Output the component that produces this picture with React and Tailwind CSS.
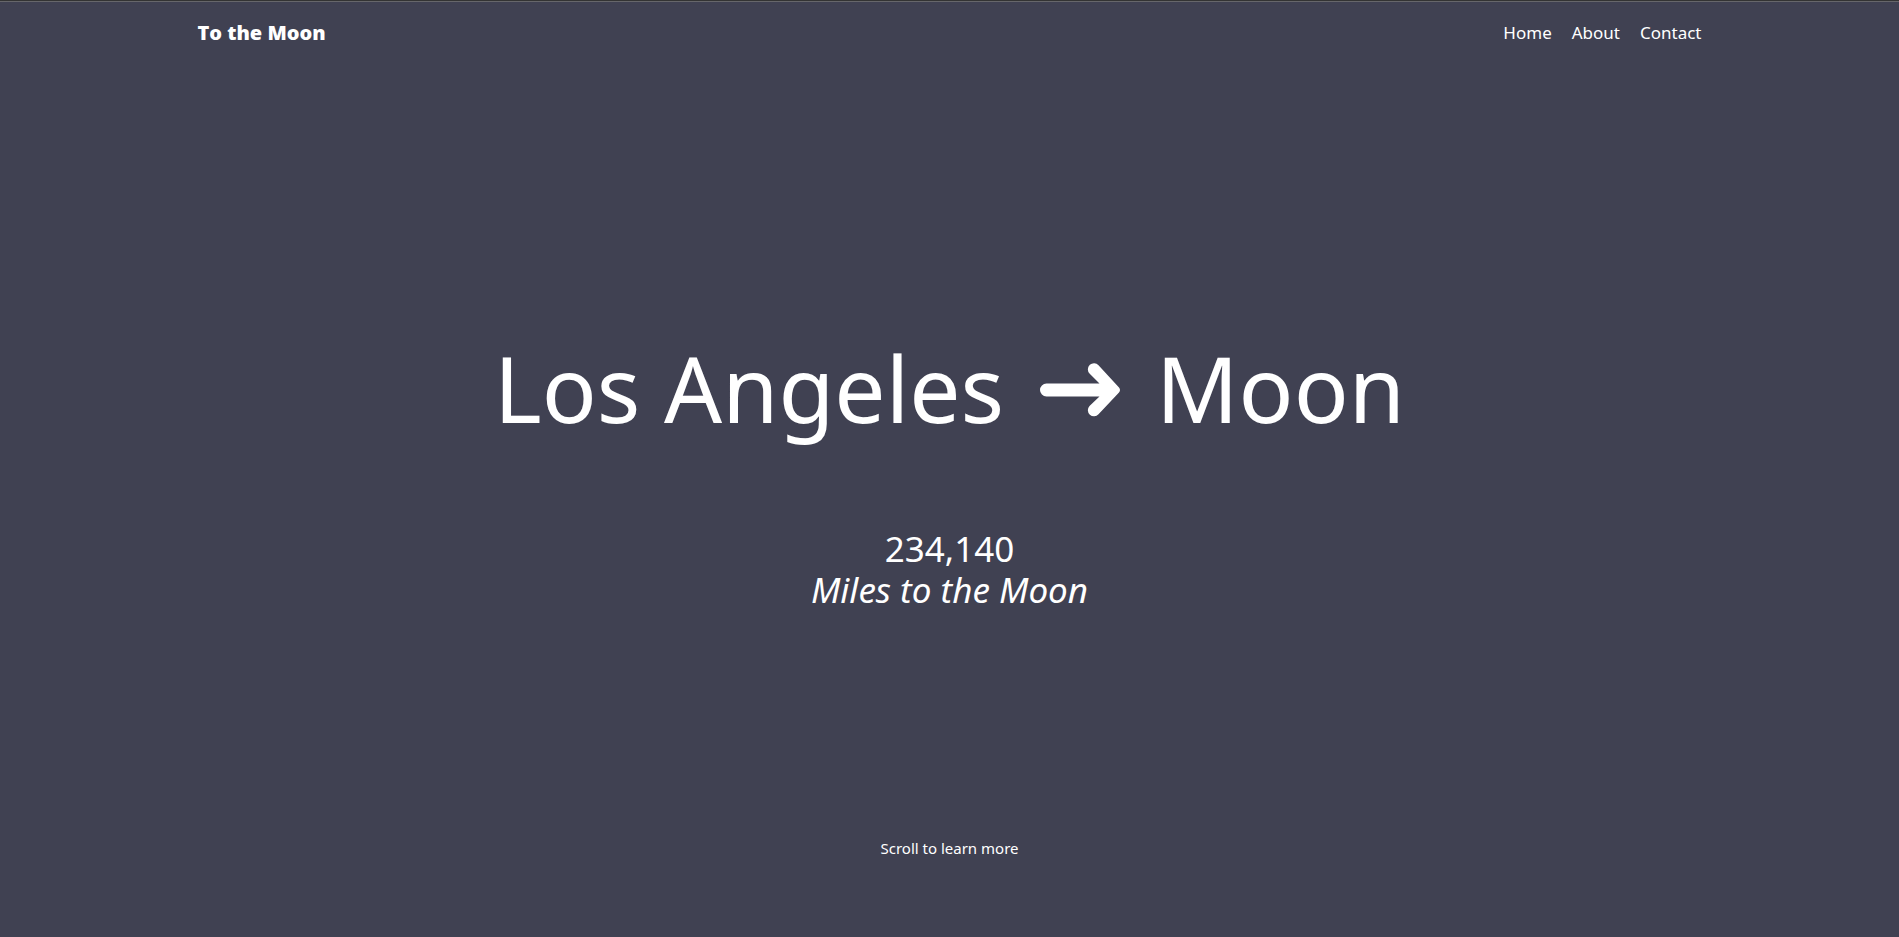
const links = [
  { label: 'Home', href: '#home' },
  { label: 'About', href: '#about' },
  { label: 'Contact', href: '#contact' },
];

function Arrow() {
  return (
    <svg viewBox="0 0 80 54" className="mt-1 h-[54px] w-20 shrink-0" fill="currentColor" role="img" aria-label="to">
      <path d="M6.5 20.5H59.5L49.5 10.5A6 6 0 0 1 58.5 2.2L79 24.5Q81 27 79 29.5L58.5 51.3A6 6 0 0 1 49.5 43L59.5 33.5H6.5A6.5 6.5 0 0 1 6.5 20.5Z" />
    </svg>
  );
}

export default function App() {
  return (
    <div className="flex min-h-screen flex-col border-t border-[#333333] bg-[#404152] font-['Noto_Sans','Open_Sans',sans-serif] text-white">
      <header className="border-t border-[#66666a]">
        <nav className="mx-auto flex h-[62px] w-full max-w-[1520px] items-center justify-between px-2">
          <a href="#home" className="font-['Open_Sans','Noto_Sans',sans-serif] text-xl font-extrabold">To the Moon</a>
          <ul className="flex gap-5 text-[17px]">
            {links.map((link) => (
              <li key={link.label}>
                <a href={link.href}>{link.label}</a>
              </li>
            ))}
          </ul>
        </nav>
      </header>
      <main className="flex grow flex-col items-center pt-[260px] text-center">
        <h1 className="flex items-center gap-9 text-[91px] leading-[128px]">
          <span>Los Angeles</span>
          <Arrow />
          <span>Moon</span>
        </h1>
        <p className="mt-[76px] text-[35px] leading-[41px]">
          234,140
          <br />
          <em>Miles to the Moon</em>
        </p>
        <p className="mt-auto mb-[77px] text-[15px] leading-6">Scroll to learn more</p>
      </main>
    </div>
  );
}
